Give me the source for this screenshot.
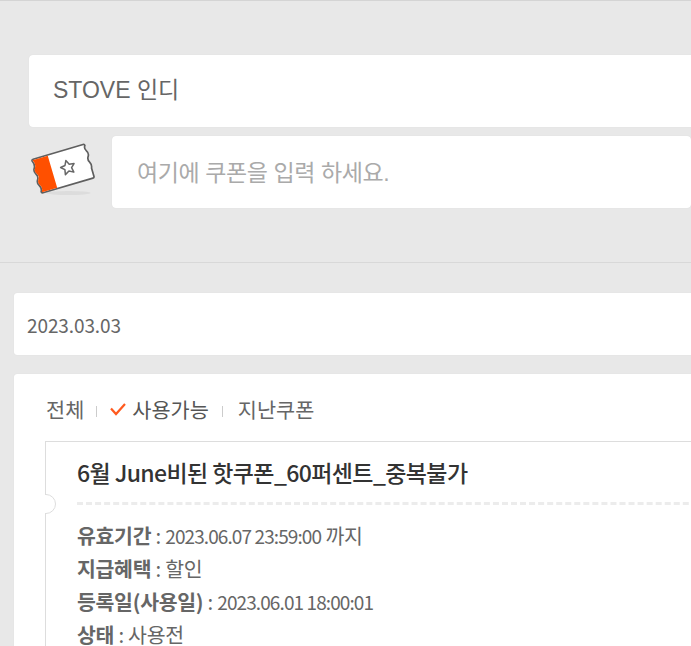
<style>
:global(body) { margin: 0; background: #e8e8e8; overflow: hidden; }
.page { height: 646px; overflow: hidden; border-top: 1px solid #d4d4d4; box-sizing: border-box; font-family: "Liberation Sans", "Noto Sans CJK KR", sans-serif; color: #666; }
.top { padding: 54px 0 54px 29px; border-bottom: 1px solid #d8d8d8; height: 262px; box-sizing: border-box; }
.field { background: #fff; border-radius: 4px; width: 720px; box-sizing: border-box; height: 72px; box-shadow: 0 0 1px #d0d0d0; display: flex; align-items: center; }
.store { font-size: 23px; padding: 0 0 6px 24px; color: #666; }
.row { display: flex; align-items: center; margin-top: 9px; gap: 17px; }
.ticket { width: 66px; height: 66px; flex: none; }
.coupon-input { font-size: 23px; padding: 0 0 3px 25px; color: #aaa; letter-spacing: -0.4px; }
.lower { padding: 30px 0 0 14px; font-family: "Noto Sans CJK KR", sans-serif; }
.date { background: #fff; width: 720px; height: 62px; border-radius: 3px; box-shadow: 0 0 1px #d0d0d0; display: flex; align-items: center; padding-left: 13px; box-sizing: border-box; font-size: 19px; color: #666; letter-spacing: -0.1px; }
.card { background: #fff; width: 720px; margin-top: 19px; border-radius: 3px; padding: 20px 0 0 31px; box-sizing: border-box; height: 300px; box-shadow: 0 0 1px #d0d0d0; }
.tabs { display: flex; align-items: center; font-size: 20.8px; height: 32px; box-sizing: border-box; padding: 0 0 2px 1px; color: #666; }
.tabs i { width: 1px; height: 11px; background: #ccc; }
.sep1 { margin: 4px 13px 0 12px; }
.sep2 { margin: 4px 15px 0 13px; }
.check { width: 16px; height: 14px; margin-right: 6px; }
.on { color: #555; }
.coupon { margin-top: 15px; border: 1px solid #ddd; border-right: 0; height: 260px; position: relative; padding: 0 0 0 31px; }
.title { margin: 0; display: flex; align-items: center; font-size: 23px; font-weight: 500; color: #333; letter-spacing: -0.6px; border-bottom: 3px dashed #ececec; box-sizing: border-box; height: 63px; }
.notch { position: absolute; left: -10px; top: 52px; width: 18px; height: 18px; border-radius: 50%; background: #fff; border: 1px solid #ddd; clip-path: inset(0 0 0 10px); }
.notch-cover { position: absolute; left: -1px; top: 53px; width: 1px; height: 18px; background: #fff; }
.info { list-style: none; margin: 14px 0 0; padding: 0; font-size: 20.5px; line-height: 33px; color: #666; letter-spacing: -0.3px; }
.info b { font-weight: 700; color: #666; }
.num { font-size: 19px; letter-spacing: -0.9px; }
</style>

<div class="page">
	<section class="top">
		<div class="field store">STOVE 인디</div>
		<div class="row">
			<svg class="ticket" viewBox="0 0 66 66" aria-hidden="true">
				<ellipse cx="39.500" cy="54" rx="22" ry="2" fill="#dcdcdc" />
				<g transform="rotate(-16.400 34.500 29.500)">
					<path d="M8 12 H60 Q61.500 12 61.500 13.500 Q59.500 16 61.500 19 Q63.500 22 61.500 25 Q59.500 28 61.500 31 Q63 34 61.500 37 V45.500 Q61.500 47 60 47 H8 Q6.500 47 6.500 45.500 Q8.500 42 6.500 39 Q4.500 36 6.500 33 Q8.500 30 6.500 27 Q4.500 24 6.500 21 Q8.500 18 6.500 13.500 Q6.500 12 8 12 Z" fill="#fff" stroke="#5f5f5f" stroke-width="1.700" stroke-linejoin="round" />
					<path d="M8 12.800 H23 V46.200 H8 Q7.500 46.200 7.300 45.500 Q9.300 42 7.300 39 Q5.300 36 7.300 33 Q9.300 30 7.300 27 Q5.300 24 7.300 21 Q9.300 18 7.300 13.500 Q7.300 12.800 8 12.800 Z" fill="#ff5000" />
					<path d="M39 22.500 L41.200 27 L46 27.700 L42.500 31 L43.400 35.900 L39 33.500 L34.600 35.900 L35.500 31 L32 27.700 L36.800 27 Z" fill="none" stroke="#666" stroke-width="1.500" stroke-linejoin="round" />
				</g>
			</svg>
			<div class="field coupon-input">여기에 쿠폰을 입력 하세요.</div>
		</div>
	</section>
	<section class="lower">
		<div class="date">2023.03.03</div>
		<div class="card">
			<div class="tabs">
				<span>전체</span>
				<i class="sep1"></i>
				<svg class="check" viewBox="0 0 16 14" aria-hidden="true"><path d="M1 6.500 L6 12 L15 2" fill="none" stroke="#ff5a1f" stroke-width="2.200" /></svg>
				<span class="on">사용가능</span>
				<i class="sep2"></i>
				<span>지난쿠폰</span>
			</div>
			<div class="coupon">
				<h2 class="title">6월 June비된 핫쿠폰_60퍼센트_중복불가</h2>
				<span class="notch"></span>
				<span class="notch-cover"></span>
				<ul class="info">
					<li><b>유효기간</b> : <span class="num">2023.06.07 23:59:00</span> 까지</li>
					<li><b>지급혜택</b> : 할인</li>
					<li><b>등록일(사용일)</b> : <span class="num">2023.06.01 18:00:01</span></li>
					<li><b>상태</b> : 사용전</li>
				</ul>
			</div>
		</div>
	</section>
</div>
